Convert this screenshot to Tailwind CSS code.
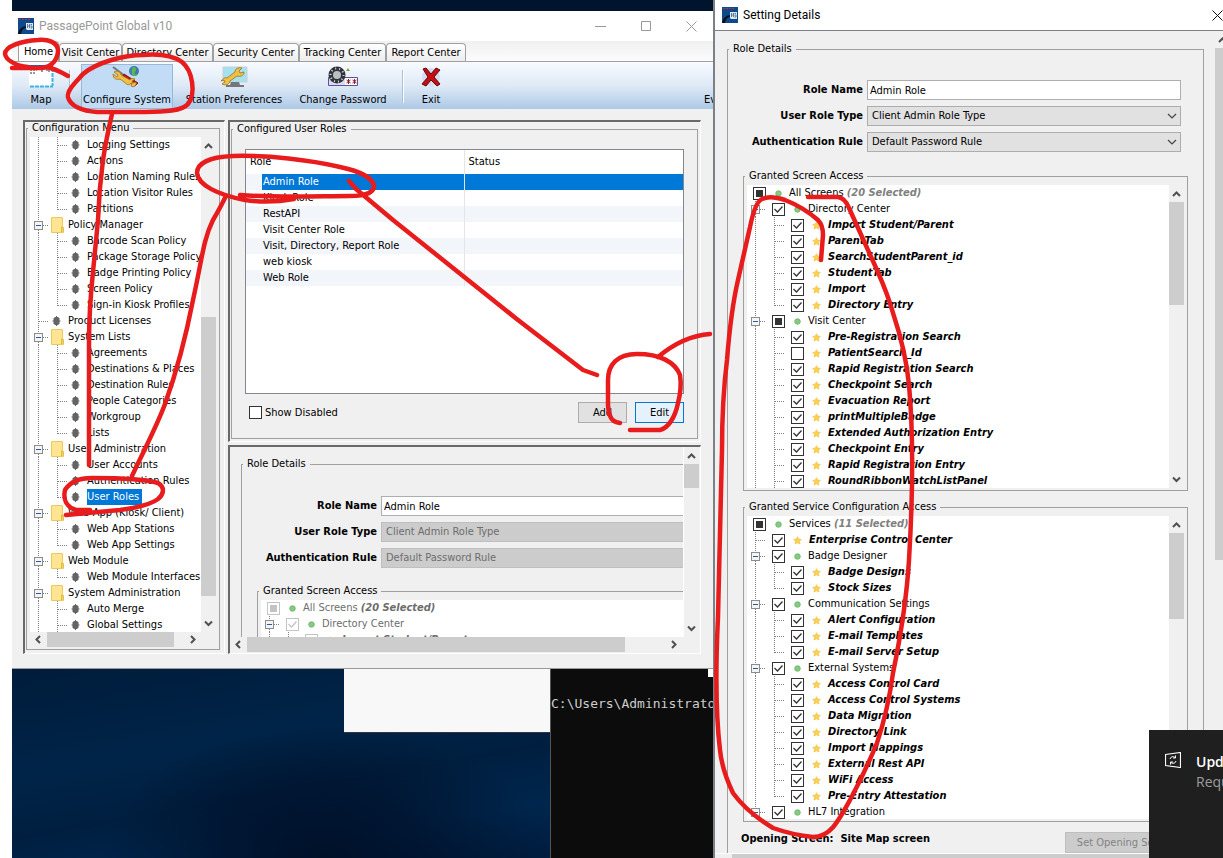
<!DOCTYPE html>
<html lang="en">
<head>
<meta charset="utf-8">
<title>PassagePoint Global v10</title>
<script src="https://cdn.jsdelivr.net/npm/@tailwindcss/browser@4"></script>
</head>
<body class="relative h-screen overflow-hidden bg-white font-['DejaVu_Sans_Condensed','DejaVu_Sans',sans-serif] text-[11px] leading-4 text-black">

<svg class="hidden">
  <symbol id="up" viewBox="0 0 15 17"><path d="M4 11 7.500 7.500 11 11" fill="none" stroke="#505050" stroke-width="2"/></symbol>
  <symbol id="down" viewBox="0 0 15 17"><path d="M4 6.500 7.500 10 11 6.500" fill="none" stroke="#505050" stroke-width="2"/></symbol>
  <symbol id="left" viewBox="0 0 17 15"><path d="M10 4 6.500 7.500 10 11" fill="none" stroke="#505050" stroke-width="2"/></symbol>
  <symbol id="right" viewBox="0 0 17 15"><path d="M7 4 10.500 7.500 7 11" fill="none" stroke="#505050" stroke-width="2"/></symbol>
  <symbol id="chev" viewBox="0 0 10 6"><path d="M1 1 5 5 9 1" fill="none" stroke="#444" stroke-width="1.200"/></symbol>
  <symbol id="folder" viewBox="0 0 19 16"><path d="M2.500.500h11v10h1v5h-12z" fill="#ffe591" stroke="#ecc95c"/><path d="M12.500 15v-5h1.500v5" fill="#ffe58e" stroke="#e2b93c"/></symbol>
  <symbol id="bullet" viewBox="0 0 19 16"><path d="M4.500 5h1v-1h1.500v-1h1v1H9.500v1h1v2.500h1v1h-1V11h-1v1H8v1H7v-1H5.500v-1h-1V8.500h-1v-1h1z" fill="#646464"/></symbol>
  <symbol id="v" viewBox="0 0 19 16"><path d="M8.500 0V16" stroke="#808080" stroke-dasharray="1 1" fill="none"/></symbol>
  <symbol id="vh" viewBox="0 0 19 16"><path d="M8.500 0V16M9 8.500h10" stroke="#808080" stroke-dasharray="1 1" fill="none"/></symbol>
  <symbol id="end" viewBox="0 0 19 16"><path d="M8.500 0V9M9 8.500h10" stroke="#808080" stroke-dasharray="1 1" fill="none"/></symbol>
  <symbol id="exp" viewBox="0 0 19 16"><path d="M8.500 0V4M8.500 13v3M13 8.500h5" stroke="#808080" stroke-dasharray="1 1"/><rect x="4.500" y="4.500" width="8" height="8" fill="#f4f4f4" stroke="#8c8c8c"/><path d="M6 8.500h5" stroke="#3355a5"/></symbol>
  <symbol id="check" viewBox="0 0 13 13"><path d="M2.500 6 5.500 9 10.500 3.500" fill="none" stroke="currentColor" stroke-width="1.300"/></symbol>
  <symbol id="mixed" viewBox="0 0 13 13"><path d="M3 3h7v7H3z" fill="currentColor"/></symbol>
  <symbol id="star" viewBox="0 0 9 9"><path d="M4.500.700 5.600 3 8.300 3.400 6.500 5.300 6.900 8 4.500 6.800 2.100 8 2.500 5.300.700 3.400 3.400 3z" fill="#fbd250" stroke="#eec04a" stroke-width=".7" stroke-linejoin="round"/></symbol>
  <symbol id="green" viewBox="0 0 9 9"><circle cx="4.500" cy="4.500" r="2.800" fill="#85cb83" stroke="#5fae5f" stroke-width=".7"/></symbol>
  <symbol id="app" viewBox="0 0 16 16"><path d="M0 0h16v16H0z" fill="#0d4a8c"/><path d="M1 1.500h11" stroke="#c02a3a" stroke-dasharray="2 1"/><path d="M0 16c1-5 4-8 9-8v2c-4 0-5 2-6 6z" fill="#08101c"/><path d="M8 5h7v7H9l-1-1z" fill="#dfe7f1"/><path d="M9.500 6v4M11.500 6v4M9.500 8h2M14 6.500h-1.500M12.500 8H14v2h-1.500" stroke="#3a6496" fill="none" stroke-width=".8"/></symbol>
</svg>

<!-- Desktop -->
<div class="absolute inset-y-0 right-0 left-3 bg-[#00142d]"></div>
<div class="absolute top-[668px] bottom-0 left-3 w-[540px] bg-[radial-gradient(ellipse_at_58%_100%,#001029_0%,#001029b3_22%,transparent_50%),linear-gradient(170deg,#001c3b_0%,#002448_38%,#001f40_60%,#00264d_80%,#001c3e_100%)]"></div>

<!-- Background windows -->
<div class="absolute top-[668px] left-[344px] h-[65px] w-[207px] border-b border-[#334] bg-[#f8f8f8]"></div>
<pre class="absolute top-[668px] bottom-0 left-[550px] w-[164px] overflow-hidden border-l border-[#555] bg-[#0c0c0c] pt-7 font-['DejaVu_Sans_Mono',monospace] text-[13px] leading-4 text-[#ccc]">C:\Users\Administrator</pre>
<div class="absolute top-[668px] left-[708px] h-[9px] w-[6px] bg-white"></div>

<!-- Main window -->
<main class="absolute top-[11px] left-3 flex h-[658px] w-[701px] flex-col border-b border-[#999] bg-[#f0f0f0]">
  <header class="flex h-[30px] shrink-0 items-center bg-white pl-[6px] font-[Roboto,sans-serif] text-xs text-[#999]">
    <svg class="size-4"><use href="#app"/></svg>
    <h1 class="ml-[5px] flex-1">PassagePoint Global v10</h1>
    <button aria-label="Minimize" class="flex w-[46px] justify-center"><svg class="size-[11px]" viewBox="0 0 11 11"><path d="M0 5.500h11" stroke="#999"/></svg></button>
    <button aria-label="Maximize" class="flex w-[46px] justify-center"><svg class="size-[11px]" viewBox="0 0 11 11"><path d="M.5.500h9v9H.500z" fill="none" stroke="#999"/></svg></button>
    <button aria-label="Close" class="flex w-[44px] justify-center"><svg class="size-[11px]" viewBox="0 0 11 11"><path d="M.5.500l10 10M10.500.500l-10 10" stroke="#999"/></svg></button>
  </header>

  <nav class="flex h-[21px] shrink-0 items-end border-b border-[#a0a0a0] bg-linear-to-b from-[#f0f0f0] to-[#fcfcfc] pl-[6px]">
    <button class="h-5 w-[41px] rounded-t-sm border border-b-0 border-[#a0a0a0] bg-white">Home</button>
    <button class="h-[18px] w-[63px] rounded-t-sm border border-b-0 border-[#a0a0a0] bg-linear-to-b from-white to-[#ececec] whitespace-nowrap">Visit Center</button>
    <button class="h-[18px] w-[91px] rounded-t-sm border border-b-0 border-[#a0a0a0] bg-linear-to-b from-white to-[#ececec] whitespace-nowrap">Directory Center</button>
    <button class="h-[18px] w-[86px] rounded-t-sm border border-b-0 border-[#a0a0a0] bg-linear-to-b from-white to-[#ececec] whitespace-nowrap">Security Center</button>
    <button class="h-[18px] w-[87px] rounded-t-sm border border-b-0 border-[#a0a0a0] bg-linear-to-b from-white to-[#ececec] whitespace-nowrap">Tracking Center</button>
    <button class="h-[18px] w-[80px] rounded-t-sm border border-b-0 border-[#a0a0a0] bg-linear-to-b from-white to-[#ececec] whitespace-nowrap">Report Center</button>
  </nav>

  <div class="flex h-[47px] shrink-0 items-stretch bg-linear-to-b from-[#f8fbff] via-[#dfeaf6] to-[#adc9e6] pt-[2px] whitespace-nowrap">
    <button class="ml-[11px] flex w-9 flex-col items-center justify-between pb-px">
      <svg class="h-[25px] w-[26px]" viewBox="0 0 26 25"><path d="M1 2h24v20H1z" fill="#fff"/><path d="M1 2h24" stroke="#235f9f" stroke-width="2"/><path d="M2 22.500h23M24.500 4v18" stroke="#3db4e6" stroke-width="2" stroke-dasharray="4 1"/><path d="M2 6h7M2 9h6M13 7h2M18 6h3v3" stroke="#333" fill="none" stroke-dasharray="2 1"/></svg>Map</button>
    <span class="my-[6px] ml-[10px] w-[2px] border-l border-[#a8c0da] bg-white"></span>
    <button class="ml-[10px] flex w-[92px] flex-col items-center justify-between border border-[#99b7d8] bg-[#c2dcf6]">
      <svg class="h-6 w-8" viewBox="0 0 32 24"><circle cx="23" cy="6" r="5" fill="#3f78b5"/><path d="M22 2c3 0 4 2 2 5s2 3 3 2-1 3-4 2-3-6-1-9z" fill="#5cb94c"/><path d="m2 2 12 9" stroke="#777" stroke-width="2"/><path d="m13 9 14 9-3 3-13-8z" fill="#c9151b" stroke="#8d0c10"/><path d="M2 9c0 5 4 6 7 5l8 6 4-2-1 3c3 2 6-1 5-4l-3 1-1-2 3-2c-3-1-5 0-5 1l-9-5c0-3-4-5-7-3l4 3-1 2z" fill="#f0c044" stroke="#9b701b" stroke-width=".8"/></svg>Configure System</button>
    <button class="ml-[9px] flex w-[104px] flex-col items-center justify-between pb-px">
      <svg class="h-[25px] w-7" viewBox="0 0 28 25"><path d="M3 3h24v15H3z" fill="#a6e1ee" stroke="#c6d0d8"/><path d="M11 18h8l1 3h4v2H6v-2h4z" fill="#73777c"/><path d="M1 17c2-2 3-4 6-3l8-6c0-3 3-5 7-4l-3 3 1 2 4-1c0 4-4 5-7 4l-7 5c0 3-4 5-8 3l3-2-1-2z" fill="#f0c044" stroke="#9b701b" stroke-width=".8"/></svg>Station Preferences</button>
    <button class="ml-2 flex w-[98px] flex-col items-center justify-between pb-px">
      <svg class="h-[25px] w-8" viewBox="0 0 32 25"><path d="M1.500 13.500h29v8h-29z" fill="#ddd9f1" stroke="#5a529d"/><circle cx="10" cy="11" r="8.500" fill="#303338"/><circle cx="10" cy="11" r="6.500" fill="none" stroke="#d7d7d7" stroke-width="2" stroke-dasharray="1 3"/><circle cx="10" cy="11" r="4" fill="#b8bec5"/><path d="M18 14h12v7H18z" fill="#fff"/><path d="M21.500 15v5M19.500 16l4 3M19.500 19l4-3M27.500 15v5M25.500 16l4 3M25.500 19l4-3" stroke="#8b1e2a"/><path d="m19 7 2-3 2 3z" fill="#8f9d28"/></svg>Change Password</button>
    <span class="my-[6px] ml-[10px] w-[2px] border-l border-[#a8c0da] bg-white"></span>
    <button class="ml-[9px] flex w-9 flex-col items-center justify-between pb-px">
      <svg class="h-[25px] w-5" viewBox="0 0 20 25"><circle cx="10" cy="13" r="9" fill="#d3dcf4"/><path d="m2 5 3-1 5 6 5-6 4 2-6 7 6 7-3 2-6-6-5 6-4-2 6-7z" fill="#c40f12" stroke="#680609"/></svg>Exit</button>
    <button class="ml-auto flex w-[9px] items-end overflow-hidden pb-px">Ev</button>
  </div>

  <div class="flex min-h-0 flex-1 gap-[3px] pt-[11px] pr-3 pb-[14px] pl-[11px]">
    <section class="flex w-[202px] flex-col border-t-2 border-r border-b border-l-2 border-t-[#696969] border-r-white border-b-white border-l-[#696969] pr-1 pb-[3px] pl-px">
      <fieldset class="flex min-h-0 min-w-0 flex-1 flex-col border border-[#a0a0a0] px-[3px] pt-[3px] pb-[2px]">
        <legend class="-ml-[2px] bg-[#f0f0f0] px-1 leading-3">Configuration Menu</legend>
        <div class="flex min-h-0 flex-1">
          <ul id="menu" class="min-w-0 flex-1 overflow-hidden bg-white"></ul>
          <div class="flex w-[15px] shrink-0 flex-col">
            <svg class="h-[17px] w-[15px]"><use href="#up"/></svg>
            <div class="mt-[163px] flex-1 bg-[#cdcdcd]"></div>
            <svg class="mt-[19px] h-[17px] w-[15px]"><use href="#down"/></svg>
          </div>
        </div>
        <div class="flex h-[15px] shrink-0 pr-[15px]">
          <svg class="h-[15px] w-[17px]"><use href="#left"/></svg>
          <div class="mr-[10px] flex-1 bg-[#cdcdcd]"></div>
          <svg class="h-[15px] w-[17px]"><use href="#right"/></svg>
        </div>
      </fieldset>
    </section>

    <div class="flex min-w-0 flex-1 flex-col gap-[3px]">
      <section class="flex min-h-0 flex-1 flex-col border-t-2 border-r border-b border-l-2 border-t-[#696969] border-r-white border-b-white border-l-[#696969] pt-px pr-[2px] pb-[2px] pl-px">
        <fieldset class="flex min-h-0 min-w-0 flex-1 flex-col border border-[#a0a0a0] px-[13px] pt-[14px] pb-[15px]">
          <legend class="-ml-3 bg-[#f0f0f0] px-1 leading-3">Configured User Roles</legend>
          <div class="min-h-0 flex-1 border border-[#828790] bg-white">
            <table class="w-full table-fixed text-left">
              <thead><tr class="h-6">
                <th class="w-[218px] border-r border-[#e5e5e5] pl-1 font-normal">Role</th>
                <th class="pl-1 font-normal">Status</th></tr></thead>
              <tbody id="roles"></tbody>
            </table>
          </div>
          <div class="mt-2 flex items-center gap-2">
            <label class="ml-1 flex flex-1 items-center gap-[3px]"><input type="checkbox" class="size-[13px] appearance-none border border-[#333] bg-white">Show Disabled</label>
            <button class="h-[21px] w-[49px] border border-[#adadad] bg-[#e1e1e1]">Add</button>
            <button class="h-[21px] w-[49px] border border-[#0078d7] bg-[#e5f1fb]">Edit</button>
          </div>
        </fieldset>
      </section>

      <section class="flex h-[209px] shrink-0 flex-col border-t-2 border-r border-b border-l-2 border-t-[#696969] border-r-white border-b-white border-l-[#696969] pr-px">
        <div class="flex min-h-0 flex-1">
          <div class="min-w-0 flex-1 overflow-hidden pt-[11px] pl-[11px]">
            <fieldset class="w-[478px] border border-[#a0a0a0] pt-[26px]">
              <legend class="ml-[1px] bg-[#f0f0f0] px-1 leading-3">Role Details</legend>
              <div class="grid grid-cols-[135px_1fr] items-center gap-x-1 gap-y-[6px] pr-[23px] text-right">
                <label for="rn1" class="font-bold">Role Name</label>
                <input id="rn1" value="Admin Role" class="h-5 min-w-0 border border-[#adadb5] bg-white px-[2px]">
                <label for="rt1" class="font-bold">User Role Type</label>
                <select id="rt1" disabled class="h-5 appearance-none border border-[#bfbfbf] bg-[#ccc] px-1 text-[#6d6d6d] opacity-100"><option>Client Admin Role Type</option></select>
                <label for="ar1" class="font-bold">Authentication Rule</label>
                <select id="ar1" disabled class="h-5 appearance-none border border-[#bfbfbf] bg-[#ccc] px-1 text-[#6d6d6d] opacity-100"><option>Default Password Rule</option></select>
              </div>
              <fieldset class="mt-[17px] mr-4 ml-[15px] border border-[#a0a0a0] px-[3px] pt-[3px]">
                <legend class="-ml-[2px] bg-[#f0f0f0] px-1 leading-3">Granted Screen Access</legend>
                <ul id="preview" class="bg-white text-[#6d6d6d]"></ul>
              </fieldset>
            </fieldset>
          </div>
          <div class="flex w-4 shrink-0 flex-col border-l border-white">
            <svg class="h-[17px] w-[15px]"><use href="#up"/></svg>
            <div class="h-6 bg-[#cdcdcd]"></div>
            <svg class="mt-auto h-[17px] w-[15px]"><use href="#down"/></svg>
          </div>
        </div>
        <div class="flex h-4 shrink-0 pr-[17px]">
          <svg class="h-[15px] w-[17px]"><use href="#left"/></svg>
          <div class="mr-[40px] mb-px flex-1 bg-[#cdcdcd]"></div>
          <svg class="h-[15px] w-[17px]"><use href="#right"/></svg>
        </div>
      </section>
    </div>
  </div>
</main>

<!-- Setting Details window -->
<section class="absolute inset-y-0 right-0 left-[713px] flex flex-col overflow-hidden border-l-2 border-[#7c8187] bg-[#f0f0f0]">
  <header class="flex h-[31px] shrink-0 items-center border-b border-[#7c8187] bg-white pl-[7px] font-[Roboto,sans-serif] text-xs">
    <svg class="size-4"><use href="#app"/></svg>
    <h2 class="ml-[5px] flex-1">Setting Details</h2>
    <button aria-label="Close details" class="flex w-[11px]"><svg class="size-[11px]" viewBox="0 0 11 11"><path d="M.5.500l10 10M10.500.500l-10 10" stroke="#111"/></svg></button>
  </header>
  <div class="flex min-h-0 flex-1">
    <form class="flex min-w-0 flex-1 flex-col pt-3 pr-[11px] pl-3">
      <fieldset class="min-w-0 flex-1 border border-b-0 border-[#a0a0a0] pt-[25px]">
        <legend class="ml-[1px] bg-[#f0f0f0] px-1 leading-3">Role Details</legend>
        <div class="grid grid-cols-[135px_1fr] items-center gap-x-1 gap-y-[6px] pr-[22px] text-right">
          <label for="rn2" class="font-bold">Role Name</label>
          <input id="rn2" value="Admin Role" class="h-5 min-w-0 border border-[#adadb5] bg-white px-[2px]">
          <label for="rt2" class="font-bold">User Role Type</label>
          <div class="grid items-center"><select id="rt2" class="col-start-1 row-start-1 h-5 appearance-none border border-[#adadad] bg-[#e1e1e1] px-1"><option>Client Admin Role Type</option></select><svg class="pointer-events-none col-start-1 row-start-1 mr-1 h-[6px] w-[10px] justify-self-end"><use href="#chev"/></svg></div>
          <label for="ar2" class="font-bold">Authentication Rule</label>
          <div class="grid items-center"><select id="ar2" class="col-start-1 row-start-1 h-5 appearance-none border border-[#adadad] bg-[#e1e1e1] px-1"><option>Default Password Rule</option></select><svg class="pointer-events-none col-start-1 row-start-1 mr-1 h-[6px] w-[10px] justify-self-end"><use href="#chev"/></svg></div>
        </div>
        <fieldset class="mt-[18px] mr-[15px] ml-[15px] flex h-[321px] flex-col border border-[#a0a0a0] px-[3px] pt-[3px] pb-[2px]">
          <legend class="-ml-[2px] bg-[#f0f0f0] px-1 leading-3">Granted Screen Access</legend>
          <div class="flex min-h-0 flex-1">
            <ul id="screens" class="min-w-0 flex-1 overflow-hidden bg-white"></ul>
            <div class="flex w-[15px] shrink-0 flex-col">
              <svg class="h-[17px] w-[15px]"><use href="#up"/></svg>
              <div class="h-[103px] bg-[#cdcdcd]"></div>
              <svg class="mt-auto h-[17px] w-[15px]"><use href="#down"/></svg>
            </div>
          </div>
        </fieldset>
        <fieldset class="mt-[10px] mr-[15px] ml-[15px] flex h-[321px] flex-col border border-[#a0a0a0] px-[3px] pt-[3px] pb-[2px]">
          <legend class="-ml-[2px] bg-[#f0f0f0] px-1 leading-3">Granted Service Configuration Access</legend>
          <div class="flex min-h-0 flex-1">
            <ul id="services" class="min-w-0 flex-1 overflow-hidden bg-white"></ul>
            <div class="flex w-[15px] shrink-0 flex-col">
              <svg class="h-[17px] w-[15px]"><use href="#up"/></svg>
              <div class="h-[86px] bg-[#cdcdcd]"></div>
              <svg class="mt-auto h-[17px] w-[15px]"><use href="#down"/></svg>
            </div>
          </div>
        </fieldset>
        <div class="mt-[10px] flex items-start justify-between pr-4 pl-[13px] font-bold">
          <p class="-mt-px whitespace-pre">Opening Screen:  Site Map screen</p>
          <button type="button" disabled class="h-[21px] w-[122px] border border-[#bfbfbf] bg-[#ccc] font-normal text-[#838383]">Set Opening Screen</button>
        </div>
      </fieldset>
    </form>
    <div class="flex w-[8px] shrink-0 flex-col overflow-hidden">
      <svg class="h-[17px] w-[15px] shrink-0"><use href="#up"/></svg>
      <div class="h-[512px] bg-[#cdcdcd]"></div>
    </div>
  </div>
  <div class="flex h-[5px] shrink-0 border-t border-white pl-[17px]"><div class="flex-1 bg-[#cdcdcd]"></div></div>
</section>

<!-- Notification -->
<aside class="absolute right-0 bottom-0 flex h-[128px] w-[74px] gap-[15px] overflow-hidden bg-[#1f1f1f] pt-[22px] pl-4 font-['Open_Sans',sans-serif] text-sm leading-5 whitespace-nowrap text-[#9c9c9c]">
  <svg class="size-4 shrink-0" viewBox="0 0 16 16" fill="none" stroke="#fff"><path d="M.5 2.500 15.500.500v15L.500 13.500z" stroke-width="1.200"/><path d="M5 7a3 3 0 0 1 5-1.500M11 9a3 3 0 0 1-5 1.500M10.500 3.500v2.500H8M5.500 12.500V10H8"/></svg>
  <div><p class="font-semibold text-white">Updates</p><p>Required</p></div>
</aside>

<!-- Hand-drawn markup -->
<svg class="pointer-events-none absolute top-0 left-0 h-[858px] w-[1223px]" fill="none" stroke="#e81c1c" stroke-width="4.500" stroke-linecap="round" stroke-linejoin="round">
  <path d="M12 68H42C53 67 58 58 58 50C57 42 48 39 38 40C22 41 5 46 5 54C6 60 16 66 28 67"/>
  <path d="M46 67Q54 68 68 76"/>
  <path d="M143 55C125 55 97 62 83 74C75 83 67 90 68 97C70 106 82 111 97 112H145C165 112 182 111 188 104C196 94 193 71 182 62C172 55 155 54 143 55"/>
  <path d="M112 114Q106 140 103 160Q99 190 98 220L93 272Q89 310 89 343V465"/>
  <path d="M240 195C280 198 320 196 350 196C366 196 374 192 374 186C372 176 358 171 340 167C310 160 268 155 233 156C210 157 197 163 197 173C198 185 218 195 245 200C265 203 283 201 294 199"/>
  <path d="M226 196Q219 210 213 220C203 240 202 260 193 300C186 336 178 368 165 404C156 428 144 450 132 476"/>
  <path d="M349 181L356 189L393 220L518 320L583 370L597 375"/>
  <path d="M90 510H76C66 507 63 499 65 490C70 482 80 478 92 478C118 478 145 479 158 483C166 488 163 495 158 499C150 505 135 508 120 510L66 515"/>
  <path d="M620 423C612 422 609 418 608 405V380C608 365 617 354 637 354C660 354 675 362 680 375Q682 388 678 403C675 418 668 428 660 430H630"/>
  <path d="M658 357Q683 336 710 334"/>
  <path d="M808 197H838Q845 198 849 208L877 270Q888 295 893 313Q906 352 909 385C914 440 912 510 909 560Q906 610 893 673Q888 710 877 743Q865 772 850 800C838 822 830 837 813 837Q793 835 773 828C755 817 743 807 733 793Q722 770 720 750Q714 700 718 617L722 450Q722 400 727 360Q731 310 738 280L750 227Q755 202 762 199Q770 195 785 200Q803 207 818 220Q823 225 823 235L821 260"/>
</svg>

<script>
const cell = id => `<svg class="h-4 w-[19px] shrink-0"><use href="#${id}"/></svg>`;

// Configuration menu: leading cells, label
const menu = [
  ['v vh bullet','Logging Settings'],['v vh bullet','Actions'],['v vh bullet','Location Naming Rules'],['v vh bullet','Location Visitor Rules'],['v end bullet','Partitions'],
  ['exp folder','Policy Manager'],['v vh bullet','Barcode Scan Policy'],['v vh bullet','Package Storage Policy'],['v vh bullet','Badge Printing Policy'],['v vh bullet','Screen Policy'],['v end bullet','Sign-in Kiosk Profiles'],
  ['vh bullet','Product Licenses'],
  ['exp folder','System Lists'],['v vh bullet','Agreements'],['v vh bullet','Destinations &amp; Places'],['v vh bullet','Destination Rules'],['v vh bullet','People Categories'],['v vh bullet','Workgroup'],['v end bullet','Lists'],
  ['exp folder','User Administration'],['v vh bullet','User Accounts'],['v vh bullet','Authentication Rules'],['v end bullet','User Roles'],
  ['exp folder','Web App (Kiosk/ Client)'],['v vh bullet','Web App Stations'],['v end bullet','Web App Settings'],
  ['exp folder','Web Module'],['v end bullet','Web Module Interfaces'],
  ['exp folder','System Administration'],['v vh bullet','Auto Merge'],['v vh bullet','Global Settings']];
document.getElementById('menu').innerHTML = menu.map(([cells, label]) =>
  `<li class="flex h-4 whitespace-nowrap">${cells.split(' ').map(cell).join('')}<span class="${label === 'User Roles' ? 'bg-[#0078d7] pr-[3px] text-white' : ''}">${label}</span></li>`).join('');

const roles = ['Admin Role','Kiosk Role','RestAPI','Visit Center Role','Visit, Directory, Report Role','web kiosk','Web Role'];
document.getElementById('roles').innerHTML = roles.map((r, i) =>
  `<tr class="h-4 ${i % 2 ? 'bg-white' : 'bg-[#f2f5f9]'}"><td class="border-r border-[#e5e5e5] p-0 pl-4"><span class="block pl-px ${i ? '' : 'bg-[#0078d7] text-white'}">${r}</span></td><td class="${i ? '' : 'bg-[#0078d7]'}"></td></tr>`).join('');

// Permission tree: depth, label, state (check, mixed, empty), last child
const row = (disabled, [depth, label, state = 'check', last = false, note = '', leaf = depth === 2]) => {
  const lead = depth === 0 ? '' : depth === 1 ? cell(leaf ? 'vh' : 'exp') : cell('v') + cell(last ? 'end' : 'vh');
  return `<li class="flex h-4 whitespace-nowrap">${lead}<label class="flex items-center">
    <span class="ml-[6px] grid size-[13px] shrink-0 bg-white ${disabled ? 'text-[#c4c4c4]' : 'text-[#333]'}"><input type="checkbox" ${state === 'check' ? 'checked' : ''} ${disabled ? 'disabled' : ''} class="col-start-1 row-start-1 size-[13px] appearance-none border border-current">${state === 'empty' ? '' : `<svg class="pointer-events-none col-start-1 row-start-1 size-[13px]"><use href="#${state}"/></svg>`}</span>
    <svg class="ml-2 size-[9px] shrink-0"><use href="#${leaf ? 'star' : 'green'}"/></svg>
    <span class="${leaf ? 'ml-[7px] font-bold italic' : 'ml-[6px]'}">${label}${note ? ` <b class="italic ${disabled ? 'text-[#6d6d6d]' : 'text-[#808080]'}">${note}</b>` : ''}</span></label></li>`;
};
const screens = [
  [0,'All Screens','mixed',false,'(20 Selected)'],[1,'Directory Center'],[2,'Import Student/Parent'],[2,'ParentTab'],[2,'SearchStudentParent_id'],[2,'StudentTab'],[2,'Import'],[2,'Directory Entry','check',true],
  [1,'Visit Center','mixed'],[2,'Pre-Registration Search'],[2,'PatientSearch_Id','empty'],[2,'Rapid Registration Search'],[2,'Checkpoint Search'],[2,'Evacuation Report'],[2,'printMultipleBadge'],[2,'Extended Authorization Entry'],[2,'Checkpoint Entry'],[2,'Rapid Registration Entry'],[2,'RoundRibbonWatchListPanel']];
const services = [
  [0,'Services','mixed',false,'(11 Selected)'],[1,'Enterprise Control Center','check',false,'',true],[1,'Badge Designer'],[2,'Badge Designs'],[2,'Stock Sizes','check',true],
  [1,'Communication Settings'],[2,'Alert Configuration'],[2,'E-mail Templates'],[2,'E-mail Server Setup','check',true],
  [1,'External Systems'],[2,'Access Control Card'],[2,'Access Control Systems'],[2,'Data Migration'],[2,'Directory Link'],[2,'Import Mappings'],[2,'External Rest API'],[2,'WiFi Access'],[2,'Pre-Entry Attestation','check',true],[1,'HL7 Integration']];
document.getElementById('screens').innerHTML = screens.map(r => row(false, r)).join('');
document.getElementById('services').innerHTML = services.map(r => row(false, r)).join('');
document.getElementById('preview').innerHTML = screens.slice(0, 3).map(r => row(true, r)).join('');
</script>
</body>
</html>
